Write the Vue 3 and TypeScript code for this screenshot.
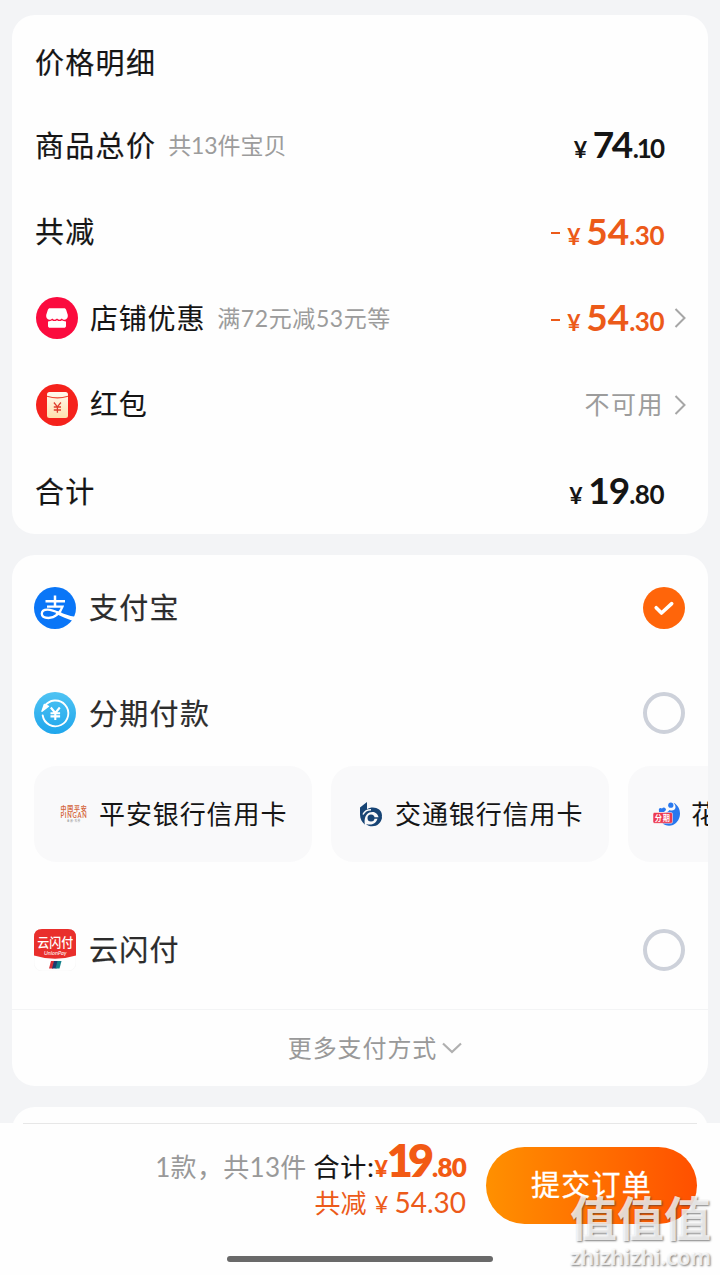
<script setup lang="ts">
import { ref } from 'vue'

interface PriceRow {
  label: string
  note?: string
  icon?: 'shop' | 'packet'
  minus?: boolean
  narrow?: boolean
  whole?: string
  cents?: string
  text?: string
  arrow?: boolean
}

const rows: PriceRow[] = [
  { label: '商品总价', note: '共13件宝贝', narrow: true, whole: '74', cents: '.10' },
  { label: '共减', minus: true, whole: '54', cents: '.30' },
  { label: '店铺优惠', note: '满72元减53元等', icon: 'shop', minus: true, whole: '54', cents: '.30', arrow: true },
  { label: '红包', icon: 'packet', text: '不可用', arrow: true },
  { label: '合计', whole: '19', cents: '.80' },
]

const method = ref('alipay')
</script>

<template>
  <div class="page">
    <section class="card prices">
      <h2 class="title">价格明细</h2>
      <div v-for="row in rows" :key="row.label" class="row" :class="{ narrow: row.narrow }">
        <svg v-if="row.icon === 'shop'" class="icon" viewBox="0 0 42 42">
          <circle cx="21" cy="21" r="21" fill="#fb0b3e" />
          <path d="M14 11.200h14c1.200 0 1.800.6 2.200 1.700l1.600 5.200c.3 2.800-1.100 4.600-3 4.600-1.600 0-2.300-.7-3-1.300-.9.9-1.800 1.300-2.600 1.300-.9 0-1.500-.4-2.200-1.100-.7.7-1.300 1.100-2.200 1.100-.9 0-1.700-.4-2.600-1.300-.7.600-1.400 1.300-3 1.300-1.900 0-3.300-1.800-3-4.600l1.600-5.200c.4-1.100 1-1.700 2.200-1.700z" fill="#fff" />
          <path d="M12 24.400c1.700 0 3-.5 4-1.200 1.700 1.200 3.300 1.200 5 0 1.700 1.200 3.300 1.200 5 0 1 .7 2.300 1.200 4 1.200v4.300c0 1.400-.8 2.100-2.100 2.100H14.100c-1.300 0-2.100-.7-2.100-2.100z" fill="#fff" />
        </svg>
        <svg v-else-if="row.icon === 'packet'" class="icon" viewBox="0 0 42 42">
          <defs>
            <linearGradient id="packet" x1="0" y1="0" x2="0" y2="1">
              <stop offset="0" stop-color="#fffaf0" />
              <stop offset="1" stop-color="#ffe0ad" />
            </linearGradient>
          </defs>
          <circle cx="21" cy="21" r="21" fill="#f5221c" />
          <rect x="11" y="8" width="21" height="26" rx="2.500" fill="url(#packet)" />
          <path d="M11 12.300q10.500 3.200 21 0" fill="none" stroke="#ef4634" stroke-width="1.200" />
          <path d="m17.900 18.500 3.500 4.300 3.500-4.300M21.400 22.800v6M17.800 23h7.200M17.800 26h7.200" fill="none" stroke="#df3c2d" stroke-width="1.300" />
        </svg>
        <span class="label" :class="{ tight: row.icon }">{{ row.label }}</span>
        <span v-if="row.note" class="note">{{ row.note }}</span>
        <span v-if="row.whole" class="amount" :class="{ minus: row.minus }"><i v-if="row.minus" class="dash"></i><span class="yen">¥</span><b>{{ row.whole }}</b><span class="cents">{{ row.cents }}</span></span>
        <span v-else class="unavailable">{{ row.text }}</span>
        <span class="slot">
          <svg v-if="row.arrow" width="12" height="20" viewBox="0 0 12 20"><path d="m1.500 1 9 9-9 9" fill="none" stroke="#a6a6a6" stroke-width="2" /></svg>
        </span>
      </div>
    </section>

    <section class="card methods">
      <div class="method" @click="method = 'alipay'">
        <svg class="icon" viewBox="0 0 42 42">
          <circle cx="21" cy="21" r="21" fill="#0a76f7" />
          <g fill="none" stroke="#fff">
            <path d="M11.500 14.300h19.500M21 8.500v11" stroke-width="2.500" />
            <path d="M13 19.700h15.500C26.300 26 21 31 14.500 31c-4.300 0-6.700-1.500-6.700-4.200 0-2.500 2.200-4.200 5.700-4.200 5 0 10 2.700 14.500 4.700" stroke-width="2.300" />
          </g>
          <path d="M23 24.200c6 2.600 12 4.500 18.500 5.600q-.7 2.600-1.700 4.500c-6.300-2.200-12.300-4.700-18.300-7.700z" fill="#fff" />
        </svg>
        <span class="name">支付宝</span>
        <svg v-if="method === 'alipay'" class="radio" viewBox="0 0 42 42">
          <circle cx="21" cy="21" r="21" fill="#ff650a" />
          <path d="m13.200 20.700 5.300 5.300 10.200-9.300" fill="none" stroke="#fff" stroke-width="3.600" stroke-linecap="round" stroke-linejoin="round" />
        </svg>
        <i v-else class="radio ring"></i>
      </div>
      <div class="method instalment" @click="method = 'instalment'">
        <svg class="icon" viewBox="0 0 42 42">
          <defs>
            <linearGradient id="sky" x1="0" y1="0" x2="0" y2="1">
              <stop offset="0" stop-color="#4fc3f3" />
              <stop offset="1" stop-color="#1fa6ec" />
            </linearGradient>
          </defs>
          <circle cx="21" cy="21" r="21" fill="url(#sky)" />
          <path d="M10.500 14.500a12.900 12.900 0 1 1-1.800 9" fill="none" stroke="#fff" stroke-width="1.900" stroke-linecap="round" />
          <path d="m14.500 14.300-6.500 5 2.300-6.800z" fill="#fff" stroke="#fff" stroke-width="1.400" stroke-linejoin="round" />
          <path d="m16.800 15.500 4.500 5.500 4.500-5.500M21.300 21v7M16.500 21.200h9.600M16.500 24.400h9.600" fill="none" stroke="#fff" stroke-width="2.100" />
        </svg>
        <span class="name">分期付款</span>
        <i class="radio ring"></i>
      </div>

      <div class="chips">
        <div class="chip">
          <svg class="pingan" viewBox="0 0 28 18">
            <text x="0.500" y="6.300" textLength="27" lengthAdjust="spacingAndGlyphs" class="pa-cn">中国平安</text>
            <text x="0.500" y="12.500" textLength="27" lengthAdjust="spacingAndGlyphs" class="pa-en">PINGAN</text>
            <text x="7" y="17.200" textLength="14" lengthAdjust="spacingAndGlyphs" class="pa-sub">金融·科技</text>
          </svg>
          <span>平安银行信用卡</span>
        </div>
        <div class="chip">
          <svg class="bocom" viewBox="0 0 24 26">
            <path d="M1 6.500 8 1v7.200C13 4.500 23 6.500 23 14.500c0 3.300-1.500 5.200-3.800 6.800.8-2.800.8-5.800-1.200-8.300-2.500-3-7.500-2.500-10 .2-2.800 3-2.600 7.800-2 10.600C2.800 20.800 1 18 1 13.500z" fill="#174474" />
            <path d="M4 13.500C5.500 10.200 8.500 8.700 12 8.700" fill="none" stroke="#f9f9fa" stroke-width="1.500" />
            <circle cx="12" cy="17" r="3.500" fill="#174474" />
            <path d="M12 16.200h11c-.6 5.600-4.700 9-9.800 9-2.700 0-4.700-.9-6.200-2.300 5 1.700 9.500.4 11.500-5.200H12z" fill="#174474" />
          </svg>
          <span>交通银行信用卡</span>
        </div>
        <div class="chip third">
          <svg class="huabei" viewBox="0 0 28 26">
            <path d="M20.500 1.800C29.500 6 29 20 20 24c-4 1.700-8.500.5-10.500-2L8 12c4 0 7-.5 8.500-3 2.500 1.300 5.800.3 6-2.500.1-2-.9-3.500-2-4.700z" fill="#2878ee" />
            <circle cx="17.800" cy="4.200" r="2.600" fill="#2878ee" />
            <path d="M6 10c-.8-2.600 1.200-4 3-2.500C10.500 5.500 13 6.500 13 9l-2 2H6z" fill="#2878ee" />
            <rect x="0" y="11.500" width="19.500" height="10.800" rx="1.500" fill="#ed3a51" stroke="#fff" stroke-width=".5" />
            <text x="1.700" y="19.800" textLength="16" lengthAdjust="spacingAndGlyphs" class="hb">分期</text>
          </svg>
          <span>花呗</span>
        </div>
      </div>

      <div class="method union" @click="method = 'union'">
        <svg class="icon" viewBox="0 0 42 42">
          <rect x="0" y="0" width="42" height="42" rx="8" fill="#fff" stroke="#f6f6f6" stroke-width=".7" />
          <path d="M0 8q0-8 8-8h26q8 0 8 8v18.500q-21 6.500-42 0z" fill="#e92f2c" />
          <text x="3.200" y="17.600" textLength="36" lengthAdjust="spacingAndGlyphs" class="un-cn">云闪付</text>
          <text x="10" y="25.500" textLength="22.500" lengthAdjust="spacingAndGlyphs" class="un-en">UnionPay</text>
          <path d="M17 32h4l-2 7.500h-4z" fill="#d93137" />
          <path d="M20 32h4.500l-2 7.500H18z" fill="#1e3c70" />
          <path d="M23.500 32h4l-2 7.500h-4z" fill="#16838b" />
        </svg>
        <span class="name">云闪付</span>
        <i class="radio ring"></i>
      </div>
      <div class="more">
        <span>更多支付方式</span>
        <svg width="20" height="12" viewBox="0 0 20 12"><path d="m1 1.500 9 8.500 9-8.500" fill="none" stroke="#b0b0b0" stroke-width="2.200" /></svg>
      </div>
    </section>

    <section class="card peek"></section>

    <footer class="bar">
      <div class="summary">
        <div class="line total"><span class="count">1款，共13件</span><span class="sum">合计:</span><span class="yen2">¥</span><b>19</b><strong>.80</strong></div>
        <div class="line saved"><span>共减</span><span class="yen3">¥</span><span class="off">54.30</span></div>
      </div>
      <button class="submit">提交订单</button>
    </footer>
    <i class="home"></i>
    <div class="mark"><span class="mark-cn">值值值</span><span class="mark-en">zhizhizhi.com</span></div>
  </div>
</template>

<style>
body { margin: 0; }
</style>

<style scoped>
.page {
  position: relative;
  box-sizing: border-box;
  width: 720px;
  height: 1275px;
  padding: 15px 12px 0;
  overflow: hidden;
  background: #f3f4f6;
  color: #151515;
  font-family: Lato, "Noto Sans CJK SC", sans-serif;
}
.card {
  box-sizing: border-box;
  background: #fefefe;
  border-radius: 23px;
  overflow: hidden;
}
.prices { height: 519px; padding: 0 22px 0 23px; }
.title {
  margin: 0;
  height: 87px;
  line-height: 96px;
  font-size: 29px;
  font-weight: 400;
  letter-spacing: 1.300px;
  -webkit-text-stroke: .2px;
}
.row { display: flex; align-items: center; height: 86.500px; }
.icon { flex: none; width: 42px; height: 42px; margin-right: 13px; }
.row .icon { margin-left: 1px; margin-right: 12px; }
.label, .note, .unavailable, .name, .chip span, .more span { padding-bottom: 3px; }
.label { font-size: 29px; letter-spacing: 1.300px; -webkit-text-stroke: .2px; }
.label.tight { font-size: 28px; letter-spacing: .8px; -webkit-text-stroke: .1px; }
.note { margin-left: 12px; font-size: 23px; letter-spacing: .6px; color: #9c9c9c; }
.narrow .note { letter-spacing: -.1px; }
.amount { display: flex; align-items: baseline; margin-left: auto; line-height: 40px; padding-top: 3px; }
.amount.minus { color: #ec5a19; }
.dash { width: 9px; height: 2px; margin-right: 7px; background: currentColor; align-self: center; }
.yen { width: 19px; font-size: 23px; font-weight: 700; }
.amount b { font-size: 37px; font-weight: 700; letter-spacing: -1px; }
.amount.minus b { letter-spacing: 0; }
.cents { font-size: 26px; font-weight: 700; letter-spacing: -.5px; }
.narrow .amount b { letter-spacing: -2.500px; margin-right: 2px; }
.narrow .cents { letter-spacing: -2px; margin-right: 1px; }
.unavailable { margin-left: auto; font-size: 25px; letter-spacing: 1.500px; color: #9c9c9c; }
.slot { display: flex; justify-content: flex-end; width: 22px; }

.methods { height: 531px; margin-top: 21px; }
.method { display: flex; align-items: center; height: 105px; padding: 0 23px 0 22px; }
.method.instalment { height: 106px; }
.name { color: #2c2c2c; font-size: 29px; letter-spacing: 1.300px; -webkit-text-stroke: .2px; }
.radio { flex: none; box-sizing: border-box; width: 42px; height: 42px; margin-left: auto; }
.ring { border: 4px solid #cdd1da; border-radius: 50%; }
.chips { display: flex; gap: 19px; height: 96px; padding-left: 22px; overflow: hidden; }
.chip {
  box-sizing: border-box;
  display: flex;
  flex: none;
  align-items: center;
  width: 278px;
  padding-left: 26px;
  border-radius: 22px;
  background: #f9f9fa;
  font-size: 26px;
  letter-spacing: .9px;
  white-space: nowrap;
}
.pingan { width: 28px; height: 18px; margin-right: 11px; }
.bocom { width: 24px; height: 26px; margin: 0 12px 0 2px; }
.chip.third { padding-left: 25px; }
.huabei { width: 28px; height: 26px; margin: 0 10px 0 0; }
.pa-cn { font-size: 6.500px; font-weight: 700; fill: #d5683f; }
.pa-en { font-size: 7px; font-weight: 700; fill: #d5683f; }
.pa-sub { font-size: 3px; fill: #888; }
.hb { font-size: 8px; font-weight: 700; fill: #fff; }
.union { height: 147px; box-sizing: border-box; padding-top: 28px; }
.un-cn { font-size: 13px; font-weight: 500; fill: #fff; }
.un-en { font-size: 6px; font-style: italic; fill: #fff; }
.more {
  display: flex;
  align-items: center;
  justify-content: center;
  gap: 5px;
  height: 76px;
  padding-left: 30px;
  border-top: 1px solid #f3f4f5;
  color: #999;
  font-size: 24px;
  letter-spacing: .9px;
}
.peek { height: 60px; margin-top: 21px; }
.bar {
  position: absolute;
  left: 0;
  right: 0;
  bottom: 0;
  height: 152px;
  box-sizing: border-box;
  display: flex;
  align-items: flex-start;
  justify-content: flex-end;
  padding: 0 23px;
  background: #fefefe;
}
.bar::before { content: ""; position: absolute; left: 23px; right: 23px; top: 0; height: 1px; background: #e7e7e7; }
.summary { padding-top: 15px; margin-right: 20px; }
.line { display: flex; align-items: baseline; justify-content: flex-end; white-space: nowrap; }
.total { height: 46px; line-height: 44px; }
.count { color: #999; font-size: 26px; letter-spacing: .3px; margin-right: 7px; }
.sum { font-size: 26px; letter-spacing: .8px; -webkit-text-stroke: .2px; }
.yen2 { font-size: 23px; font-weight: 900; color: #f25a14; }
.total b { font-size: 45px; font-weight: 800; letter-spacing: -5px; margin-left: -1px; color: #f25a14; }
.total strong { font-size: 26px; font-weight: 800; color: #f25a14; letter-spacing: -.8px; margin-left: 3px; }
.saved { height: 36px; line-height: 36px; color: #ec5a19; font-size: 26px; }
.yen3 { margin-left: 8px; font-size: 24px; }
.off { margin-left: 6px; font-size: 28px; }
.submit {
  width: 211px;
  height: 77px;
  margin-top: 24px;
  border: 0;
  border-radius: 39px;
  background: linear-gradient(90deg, #ff9000, #ff5000);
  color: #fff;
  font: 400 29px/75px Lato, "Noto Sans CJK SC", sans-serif;
  letter-spacing: 1.300px;
  -webkit-text-stroke: .3px;
  padding: 0 0 2px;
}
.home { position: absolute; left: 227px; top: 1256px; width: 266px; height: 6px; border-radius: 3px; background: #696969; }
.mark { position: absolute; left: 570px; top: 1191px; width: 145px; display: flex; flex-direction: column; color: rgba(255, 255, 255, .78); text-shadow: 1px 1px 2px rgba(60, 60, 60, .65); }
.mark-cn { font-size: 47px; line-height: 54px; height: 54px; font-weight: 700; white-space: nowrap; }
.mark-en { font: 600 21.500px/24px "Noto Sans", sans-serif; }
</style>
